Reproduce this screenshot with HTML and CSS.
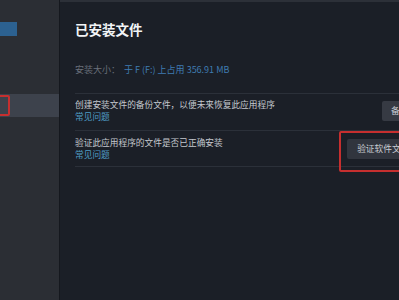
FILE: index.html
```html
<!DOCTYPE html>
<html lang="zh">
<head>
<meta charset="utf-8">
<link rel="stylesheet" href="styles.css">
</head>
<body>
<div class="app">
  <aside class="sidebar">
    <div class="side-tab"></div>
    <div class="side-item selected"></div>
    <div class="mark mark-side"></div>
  </aside>
  <main class="panel">
    <h1 class="title">已安装文件</h1>
    <div class="size-row">
      <span class="label">安装大小：</span>
      <span class="value">于 F (F:) 上占用 356.91 MB</span>
    </div>
    <div class="row row-first">
      <div class="text">
        <div class="desc">创建安装文件的备份文件，以便未来恢复此应用程序</div>
        <div class="link">常见问题</div>
      </div>
      <div class="btn btn-backup">备份软件文件</div>
    </div>
    <div class="row row-second">
      <div class="text">
        <div class="desc">验证此应用程序的文件是否已正确安装</div>
        <div class="link">常见问题</div>
      </div>
      <div class="btn btn-verify">验证软件文件的完整性</div>
    </div>
    <div class="row-end"></div>
    <div class="mark mark-verify"></div>
  </main>
</div>
</body>
</html>
```

FILE: styles.css
```css
html, body {
  margin: 0;
  padding: 0;
  background: #1b1f27;
  overflow: hidden;
}
body {
  width: 399px;
  height: 300px;
  font-family: "Noto Sans CJK SC", "Noto Sans", sans-serif;
}
.app {
  display: flex;
  width: 480px;
  height: 300px;
}
.sidebar {
  position: relative;
  width: 59px;
  flex: none;
  background: #2b2e34;
  border-right: 1px solid #15181e;
  padding-top: 22px;
  box-sizing: content-box;
}
.side-tab {
  width: 17px;
  height: 14px;
  background: #2c6190;
}
.side-item.selected {
  margin-top: 58px;
  height: 23px;
  background: #3d424c;
}
.mark {
  position: absolute;
  border: 2px solid #c62f2f;
  border-radius: 2px;
  box-sizing: border-box;
}
.mark-side {
  left: -4px;
  top: 95px;
  width: 14px;
  height: 21px;
}
.panel {
  position: relative;
  width: 420px;
  flex: none;
  box-sizing: border-box;
  border-top: 2px solid #2c3038;
  padding: 19px 26px 0 15px;
  background: #1b1f27;
}
.title {
  margin: 0;
  font-size: 13.5px;
  line-height: 16px;
  font-weight: 700;
  color: #f2f4f6;
}
.size-row {
  margin-top: 27px;
  font-size: 9px;
  line-height: 12px;
  white-space: nowrap;
}
.label {
  color: #6a707a;
}
.value {
  color: #3f7cb2;
  margin-left: 2px;
}
.row {
  display: flex;
  align-items: center;
  justify-content: space-between;
  border-top: 1px solid #2b3039;
}
.row-first {
  margin-top: 17px;
  padding: 5px 0 7px;
}
.row-second {
  padding: 6px 0 5px;
}
.row-end {
  border-top: 1px solid #2b3039;
}
.desc {
  font-size: 8.7px;
  line-height: 12px;
  color: #c4c8ce;
  white-space: nowrap;
}
.link {
  font-size: 8.7px;
  line-height: 12px;
  color: #4f9dc6;
}
.btn {
  height: 20px;
  line-height: 20px;
  font-size: 8.7px;
  color: #c9cdd3;
  background: #363a43;
  border-radius: 2px;
  white-space: nowrap;
  flex: none;
}
.btn-backup {
  padding: 0 11px 0 9px;
}
.btn-verify {
  padding: 0 10px;
  background: #31353e;
}
.mark-verify {
  left: 279px;
  top: 129px;
  width: 120px;
  height: 41px;
}
```
